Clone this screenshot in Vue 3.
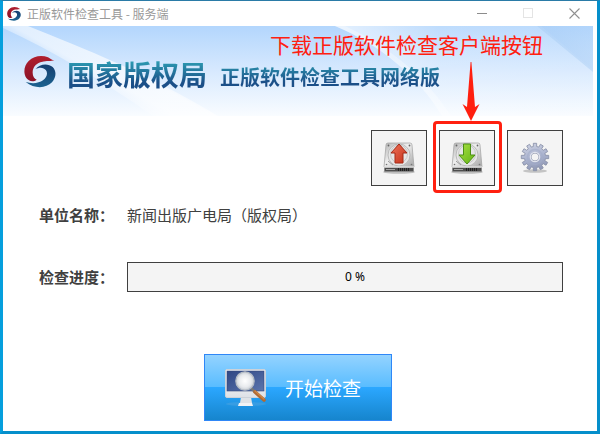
<script setup>
import { ref } from 'vue'

const progress = ref(0)
const company = '新闻出版广电局（版权局）'

const gearPath = (() => {
  const teeth = 12
  const point = (r, a) => `${(15 + r * Math.cos(a)).toFixed(2)} ${(15 + r * Math.sin(a)).toFixed(2)}`
  const points = []
  for (let i = 0; i < teeth; i++) {
    const a = (i / teeth) * Math.PI * 2 - Math.PI / 2
    points.push(point(10.6, a - 0.16), point(13.8, a - 0.12), point(13.8, a + 0.12), point(10.6, a + 0.16))
  }
  return `M${points.join('L')}Z M19 15A4 4 0 1 0 11 15A4 4 0 1 0 19 15Z`
})()
</script>

<template>
  <div class="window">
    <svg class="defs" aria-hidden="true">
      <defs>
        <linearGradient id="logo-red" x2="0" y2="1">
          <stop offset="0" stop-color="#b01f2e" /><stop offset="1" stop-color="#8b1228" />
        </linearGradient>
        <linearGradient id="logo-blue" x2="0" y2="1">
          <stop offset="0" stop-color="#143e70" /><stop offset="1" stop-color="#1c6390" />
        </linearGradient>
        <linearGradient id="metal" x2="1" y2="1">
          <stop offset="0" stop-color="#b5b5b5" /><stop offset=".45" stop-color="#efefef" /><stop offset="1" stop-color="#a5a5a5" />
        </linearGradient>
        <linearGradient id="arrow-red" x2="1" y2="1">
          <stop offset="0" stop-color="#ef735a" /><stop offset="1" stop-color="#c42f17" />
        </linearGradient>
        <linearGradient id="arrow-green" x2="1" y2="1">
          <stop offset="0" stop-color="#a9e044" /><stop offset="1" stop-color="#62b412" />
        </linearGradient>
        <symbol id="logo" viewBox="0 0 96 96">
          <path fill="url(#logo-red)" d="M91 13C75 17 62 14 49 19C34 24 26 36 26 50C26 61 31 68 38 71C28 79 14 76 7 66C-3 51 0 29 14 15C30-1 54-3 72 4C79 8 84 13 91 13Z" />
          <path fill="url(#logo-blue)" d="M34 40C47 23 72 21 86 33C98 45 97 64 84 79C66 98 31 99 5 78C24 84 45 82 57 73C69 64 72 51 66 43C59 34 46 33 34 40Z" />
        </symbol>
        <symbol id="disk" viewBox="0 0 32 32">
          <ellipse cx="16" cy="30" rx="16" ry="1.8" fill="#999" opacity=".6" />
          <path d="M3 3Q3 1 5 1H27Q29 1 29 3L31 25H1Z" fill="url(#metal)" stroke="#a0a0a0" stroke-width=".7" />
          <ellipse cx="16" cy="13" rx="11" ry="11" fill="#e6e6e6" stroke="#b0b0b0" stroke-width=".8" />
          <ellipse cx="16" cy="12" rx="8.5" ry="9" fill="none" stroke="#c8c8c8" />
          <path d="M5 19L10 23" stroke="#999" stroke-width="1" />
          <circle cx="5.5" cy="3.5" r=".9" fill="#666" /><circle cx="26.5" cy="3.5" r=".9" fill="#666" />
          <circle cx="3.5" cy="22.5" r=".8" fill="#777" /><circle cx="28.5" cy="22.5" r=".8" fill="#777" />
          <path d="M1 25H31V29Q31 30 30 30H2Q1 30 1 29Z" fill="#8c8c8c" />
          <path d="M2 26H30V29H2Z" fill="#4d4d4d" />
          <path d="M3 27.5H12" stroke="#a4a4a4" />
          <path d="M15.500 26V29M17.500 26V29M19.500 26V29M21.500 26V29M23.500 26V29M25.500 26V29" stroke="#222" />
          <path d="M1 25H31" stroke="#f7f7f7" />
        </symbol>
      </defs>
    </svg>

    <header class="titlebar">
      <svg class="app-icon" aria-hidden="true"><use href="#logo" /></svg>
      <span class="app-title">正版软件检查工具 - 服务端</span>
      <button class="caption" type="button" aria-label="最小化">
        <svg width="11" height="11"><path d="M0 5.5H10" stroke="#8c8c8c" /></svg>
      </button>
      <button class="caption" type="button" aria-label="最大化" disabled>
        <svg width="11" height="11"><rect x=".5" y=".5" width="9" height="9" fill="none" stroke="#e4e4e4" /></svg>
      </button>
      <button class="caption" type="button" aria-label="关闭">
        <svg width="11" height="11"><path d="M.5 .5L10.5 10.5M10.5 .5L.5 10.5" stroke="#909090" stroke-width="1.1" /></svg>
      </button>
    </header>

    <main class="client">
      <div class="banner">
        <svg class="banner-art" viewBox="0 0 590 90" preserveAspectRatio="none" aria-hidden="true">
          <defs>
            <linearGradient id="sky" x2="0" y2="1">
              <stop offset="0" stop-color="#b3d6fd" /><stop offset=".5" stop-color="#d7e9fe" /><stop offset="1" stop-color="#f9fcff" />
            </linearGradient>
            <linearGradient id="beam" gradientUnits="userSpaceOnUse" x1="82" y1="58" x2="104" y2="18">
              <stop offset="0" stop-color="#fff" stop-opacity="0" /><stop offset=".35" stop-color="#fff" stop-opacity=".6" /><stop offset=".75" stop-color="#fff" stop-opacity=".65" /><stop offset="1" stop-color="#fff" stop-opacity="0" />
            </linearGradient>
            <linearGradient id="veil" x2="1" y2="0">
              <stop offset="0" stop-color="#fff" stop-opacity=".65" /><stop offset=".4" stop-color="#fff" stop-opacity=".15" /><stop offset="1" stop-color="#fff" stop-opacity=".1" />
            </linearGradient>
            <linearGradient id="edge" x1="0" y1="1" x2="1" y2="0">
              <stop offset=".4" stop-color="#a9cdf3" stop-opacity="0" /><stop offset=".5" stop-color="#a3c9f2" stop-opacity=".4" /><stop offset="1" stop-color="#a9cdf3" stop-opacity=".15" />
            </linearGradient>
          </defs>
          <rect width="590" height="90" fill="url(#sky)" />
          <path d="M0 0H25C80 22 146 48 215 90H150C100 55 50 25 0 2Z" fill="url(#beam)" />
          <path d="M332 0C375 18 415 49 439 90H590V44L538 0Z" fill="url(#veil)" />
          <path d="M332 0H342C386 20 424 52 448 90H439C415 49 375 18 332 0Z" fill="#fff" opacity=".3" />
          <path d="M534 0H590V46Z" fill="url(#edge)" />
        </svg>
        <svg class="banner-logo" aria-hidden="true"><use href="#logo" /></svg>
        <h1 class="brand">国家版权局</h1>
        <p class="product">正版软件检查工具网络版</p>
        <p class="callout">下载正版软件检查客户端按钮</p>
      </div>

      <div class="content">
        <div class="tools">
          <button class="tool" type="button" aria-label="上传">
            <svg width="32" height="32" viewBox="0 0 32 32">
              <use href="#disk" />
              <path d="M16 2L24 11H20V21H12V11H8Z" fill="url(#arrow-red)" stroke="#a42a17" stroke-linejoin="round" />
            </svg>
          </button>
          <button class="tool" type="button" aria-label="下载">
            <svg width="32" height="32" viewBox="0 0 32 32">
              <use href="#disk" />
              <path d="M12.500 2H19.500V13H24L16 22L8 13H12.500Z" fill="url(#arrow-green)" stroke="#4d8f16" stroke-linejoin="round" />
            </svg>
            <span class="highlight"></span>
            <svg class="pointer" width="18" height="60" viewBox="0 0 18 60" aria-hidden="true">
              <path d="M8.6 0H9.4L13 45L17.5 42L9 59L.5 42L5 45Z" fill="#ff1f0f" />
            </svg>
          </button>
          <button class="tool" type="button" aria-label="设置">
            <svg width="30" height="32" viewBox="0 0 30 32">
              <defs>
                <linearGradient id="gear" x2=".3" y2="1">
                  <stop offset="0" stop-color="#d2d6e4" /><stop offset=".55" stop-color="#adb5d0" /><stop offset="1" stop-color="#929bb8" />
                </linearGradient>
              </defs>
              <ellipse cx="15" cy="29" rx="12" ry="1.8" fill="#aaa" opacity=".65" />
              <path :d="gearPath" fill="url(#gear)" fill-rule="evenodd" stroke="#858da5" stroke-width=".8" stroke-linejoin="round" />
              <circle cx="15" cy="15" r="7.5" fill="none" stroke="#a3adca" stroke-width="1.4" opacity=".6" />
              <circle cx="15" cy="15" r="4.6" fill="none" stroke="#e0e3ed" stroke-width="1.4" />
            </svg>
          </button>
        </div>

        <dl class="row company">
          <dt class="label">单位名称：</dt>
          <dd class="value">{{ company }}</dd>
        </dl>

        <div class="row">
          <label class="label" for="check-progress">检查进度：</label>
          <div class="meter">
            <progress id="check-progress" class="bar" max="100" :value="progress"></progress>
            <span class="percent">{{ progress }} %</span>
          </div>
        </div>

        <button class="start" type="button">
          <svg width="42" height="40" viewBox="0 0 42 40" aria-hidden="true">
            <defs>
              <linearGradient id="screen" x2="1" y2="1">
                <stop offset="0" stop-color="#2f4684" /><stop offset="1" stop-color="#5b75ad" />
              </linearGradient>
              <linearGradient id="case" x2="0" y2="1">
                <stop offset="0" stop-color="#fff" /><stop offset="1" stop-color="#dde1e6" />
              </linearGradient>
              <radialGradient id="lens">
                <stop offset="0" stop-color="#fff" /><stop offset=".65" stop-color="#e9ebee" /><stop offset="1" stop-color="#c9ced5" />
              </radialGradient>
            </defs>
            <ellipse cx="21" cy="36" rx="20" ry="2" fill="#6eb0df" opacity=".3" />
            <path d="M16 29H26L27 35H15Z" fill="#dfe3e7" />
            <path d="M14 35H27L28 38H13Z" fill="#f1f3f5" />
            <rect x=".5" y="1.500" width="40" height="28" rx="1.5" fill="url(#case)" stroke="#ccd2d9" />
            <rect x="2" y="3" width="37" height="20" fill="url(#screen)" stroke="#34467a" stroke-width=".6" />
            <path d="M26 20L30 24" stroke="#777" stroke-width="2.500" />
            <path d="M30 24L39 32" stroke="#b06a33" stroke-width="3.600" stroke-linecap="round" />
            <path d="M30 23L39 31" stroke="#cf8748" stroke-width="1.200" stroke-linecap="round" />
            <circle cx="20" cy="13" r="9.200" fill="url(#lens)" stroke="#b4bbc4" stroke-width="1.200" />
          </svg>
          <span>开始检查</span>
        </button>
      </div>
    </main>
  </div>
</template>

<style>
body {
  margin: 0;
}
</style>

<style scoped>
.window {
  box-sizing: border-box;
  display: flex;
  flex-direction: column;
  min-height: 100vh;
  border: 3px solid #058fcb;
  border-top: 1px solid #2a7ba7;
  border-left-color: #059fdd;
  background: #fff;
  color: #404040;
  font-family: "Noto Sans CJK SC", sans-serif;
  font-size: 15px;
  line-height: 20px;
}

.defs {
  position: absolute;
  width: 0;
  height: 0;
}

button {
  padding: 0;
  font: inherit;
}

.titlebar {
  display: flex;
  align-items: center;
  height: 25px;
  padding-left: 4px;
}

.app-icon {
  width: 14px;
  height: 14px;
}

.app-title {
  flex: 1;
  padding-left: 6px;
  color: #999;
  font-size: 12px;
}

.caption {
  display: grid;
  place-items: center;
  width: 46px;
  height: 25px;
  border: 0;
  background: none;
}

.client {
  display: flex;
  flex: 1;
  flex-direction: column;
  padding-right: 4px;
}

.banner {
  position: relative;
  display: flex;
  align-items: center;
  height: 90px;
  padding: 2px 0 0 21px;
  box-sizing: border-box;
}

.banner-art {
  position: absolute;
  inset: 0;
  width: 100%;
  height: 100%;
}

.banner-logo {
  position: relative;
  width: 32px;
  height: 32px;
}

.brand,
.product {
  position: relative;
  margin: 0;
  background: linear-gradient(#2c9bb2 20%, #1b4f88 80%);
  background-clip: text;
  color: transparent;
  font-weight: 700;
  white-space: nowrap;
}

.brand {
  padding: 4px 0 0 11px;
  font-size: 28px;
  line-height: 32px;
}

.product {
  padding: 10px 0 0 13px;
  font-size: 20px;
  line-height: 24px;
}

.callout {
  position: absolute;
  top: 4px;
  right: 50px;
  margin: 0;
  color: #ff2010;
  font-size: 21px;
  line-height: 28px;
  white-space: nowrap;
}

.content {
  display: flex;
  flex: 1;
  flex-direction: column;
  padding: 14px 30px 10px 36px;
}

.tools {
  display: flex;
  justify-content: flex-end;
  gap: 12px;
}

.tool {
  position: relative;
  display: grid;
  place-items: center;
  width: 56px;
  height: 56px;
  border: 1px solid #404040;
  background: #f4f4f4;
}

.highlight {
  position: absolute;
  inset: -10px -8px -8px -7px;
  border: 3px solid #ff2010;
  border-radius: 4px;
}

.pointer {
  position: absolute;
  top: -69px;
  left: 22px;
}

.row {
  display: flex;
  align-items: center;
  height: 30px;
  margin: 0;
}

.company {
  margin: 14px 0 32px;
}

.label {
  flex: none;
  width: 88px;
  font-weight: 700;
}

.value {
  margin: 0;
}

.meter {
  display: grid;
  flex: 1;
}

.bar,
.percent {
  grid-area: 1 / 1;
}

.bar {
  box-sizing: border-box;
  width: 100%;
  height: 30px;
  border: 1px solid #404040;
  background: #f4f4f4;
  appearance: none;
}

.bar::-webkit-progress-bar {
  background: #f4f4f4;
}

.bar::-webkit-progress-value {
  background: #2ea8fc;
}

.percent {
  z-index: 1;
  place-self: center;
  padding-left: 20px;
  color: #000;
  font-family: "Noto Sans", sans-serif;
  font-size: 12px;
}

.start {
  display: flex;
  align-items: center;
  align-self: center;
  gap: 18px;
  box-sizing: border-box;
  width: 188px;
  height: 67px;
  margin: 62px 6px 0 0;
  padding-left: 20px;
  border: 1px solid #2f87f7;
  background: linear-gradient(#94d3ff, #58bcff 50%, #2ba7ff 50%, #1685cd);
  color: #fff;
  font-size: 19px;
}
</style>
